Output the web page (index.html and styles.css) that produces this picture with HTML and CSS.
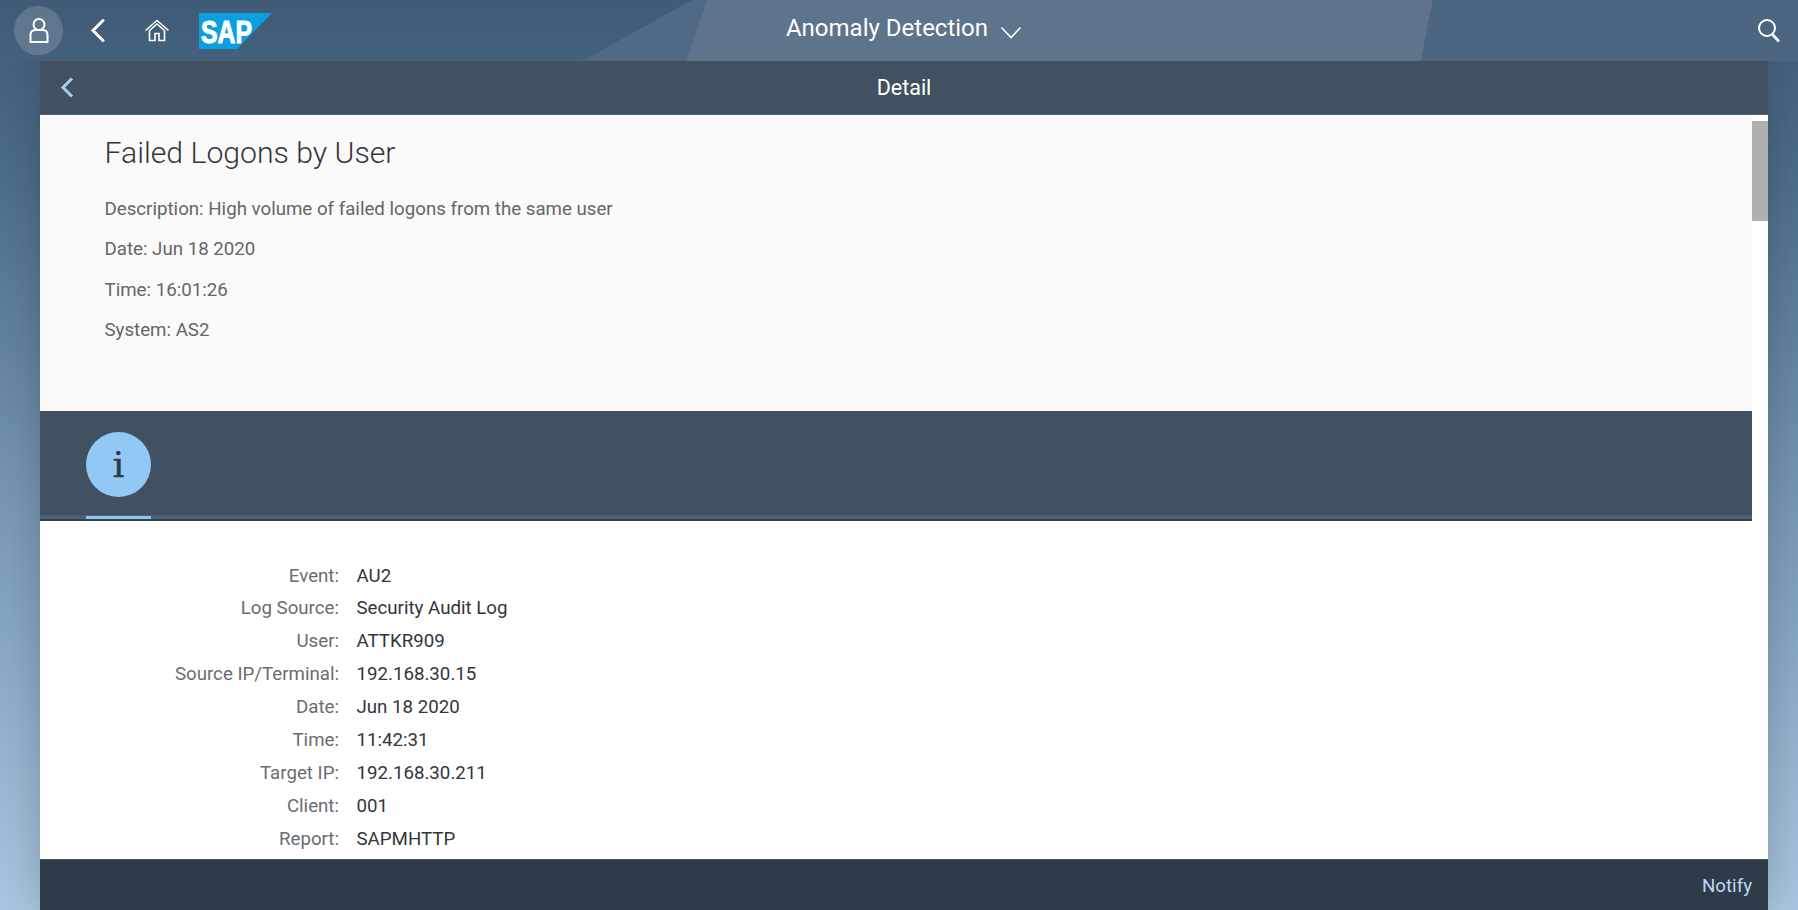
FILE: index.html

```html
<!DOCTYPE html>
<html lang="en">
<head>
    <meta charset="UTF-8">
    <title>Anomaly Detection</title>
    <link rel="stylesheet" href="styles.css">
</head>
<body>
    <svg class="backdrop" viewBox="0 0 1798 910" preserveAspectRatio="none" aria-hidden="true">
        <polygon points="582,61 692,0 707,0 686,61" fill="#4f6a84"/>
        <polygon points="707,0 1433,0 1421,61 686,61" fill="#5d748c"/>
        <polygon points="1433,0 1798,0 1798,61 1421,61" fill="#4b6680"/>
    </svg>

    <header class="shell">
        <div class="shell-left">
            <button class="shell-btn user-btn">
                <svg width="20" height="25" viewBox="0 0 20 25" fill="none" stroke="#fff" stroke-width="2">
                    <circle cx="10" cy="6.500" r="5.500"/>
                    <path d="M1.500 24v-7c0-3 2-5 5-5h7c3 0 5 2 5 5v7z"/>
                </svg>
            </button>
            <button class="shell-btn back-btn">
                <svg width="15" height="23" viewBox="0 0 15 23" fill="none" stroke="#fff" stroke-width="3" stroke-linecap="round">
                    <path d="M13 1.500 3 11.500l10 10"/>
                </svg>
            </button>
            <button class="shell-btn home-btn">
                <svg width="26" height="23" viewBox="0 0 26 23" fill="none" stroke="#fff" stroke-width="1.600">
                    <path d="M1.500 11.500 13 1.500l11.500 10M5.500 11.500 13 5l7.500 6.500M5.500 11.500V21.500h5.500V14.500h4v7h5.500V11.500"/>
                </svg>
            </button>
            <svg class="sap-logo" width="73" height="36" viewBox="0 0 73 36">
                <polygon points="0,0 73,0 38,36 0,36" fill="#0a9fe0"/>
                <text x="2" y="30" class="sap-text" textLength="51" lengthAdjust="spacingAndGlyphs">SAP</text>
            </svg>
        </div>
        <div class="shell-title">
            <span>Anomaly Detection</span>
            <svg width="22" height="13" viewBox="0 0 22 13" fill="none" stroke="#fff" stroke-width="1.600">
                <path d="M1.500 1.500 11 11.500l9.500-10"/>
            </svg>
        </div>
        <div class="shell-right">
            <svg width="24" height="25" viewBox="0 0 24 25" fill="none" stroke="#fff" stroke-width="2">
                <circle cx="10" cy="10" r="8"/>
                <path d="m15.500 16.500 6.500 7" stroke-width="2.600"/>
            </svg>
        </div>
    </header>

    <main class="app">
        <div class="nav-bar">
            <button class="nav-back">
                <svg width="14" height="21" viewBox="0 0 14 21" fill="none" stroke="#a9cfee" stroke-width="3">
                    <path d="M12 1.500 3 10.500l9 9"/>
                </svg>
            </button>
            <h2 class="nav-title">Detail</h2>
        </div>

        <div class="page">
            <div class="scroll-content">
                <section class="object-header">
                    <h1>Failed Logons by User</h1>
                    <p>Description: High volume of failed logons from the same user</p>
                    <p>Date: Jun 18 2020</p>
                    <p>Time: 16:01:26</p>
                    <p>System: AS2</p>
                </section>

                <div class="tab-bar">
                    <div class="tab-icon">i</div>
                    <div class="tab-strip"><div class="tab-mark"></div></div>
                </div>

                <section class="form">
                    <div class="form-row"><span class="form-label">Event:</span><span class="form-value">AU2</span></div>
                    <div class="form-row"><span class="form-label">Log Source:</span><span class="form-value">Security Audit Log</span></div>
                    <div class="form-row"><span class="form-label">User:</span><span class="form-value">ATTKR909</span></div>
                    <div class="form-row"><span class="form-label">Source IP/Terminal:</span><span class="form-value">192.168.30.15</span></div>
                    <div class="form-row"><span class="form-label">Date:</span><span class="form-value">Jun 18 2020</span></div>
                    <div class="form-row"><span class="form-label">Time:</span><span class="form-value">11:42:31</span></div>
                    <div class="form-row"><span class="form-label">Target IP:</span><span class="form-value">192.168.30.211</span></div>
                    <div class="form-row"><span class="form-label">Client:</span><span class="form-value">001</span></div>
                    <div class="form-row"><span class="form-label">Report:</span><span class="form-value">SAPMHTTP</span></div>
                </section>
            </div>
            <div class="scrollbar"><div class="scroll-thumb"></div></div>
        </div>

        <footer class="footer">
            <button class="notify-btn">Notify</button>
        </footer>
    </main>
</body>
</html>
```

FILE: styles.css

```css
* {
    box-sizing: border-box;
    margin: 0;
    padding: 0;
}

html, body {
    height: 100%;
}

body {
    font-family: "Roboto", "Noto Sans", sans-serif;
    overflow: hidden;
    position: relative;
    display: flex;
    flex-direction: column;
    background: linear-gradient(180deg, #3f5b76 0%, #4d6d8a 20%, #7d9cb8 60%, #a8c6e0 100%);
}

button {
    background: none;
    border: none;
    font-family: inherit;
    cursor: pointer;
}

.backdrop {
    position: absolute;
    top: 0;
    left: 0;
    width: 100%;
    height: 100%;
}

/* Shell header */
.shell {
    position: relative;
    height: 61px;
    flex: none;
    display: flex;
    align-items: center;
    justify-content: space-between;
}

.shell-left {
    display: flex;
    align-items: center;
    width: 300px;
    padding-left: 14px;
}

.shell-btn {
    display: flex;
    align-items: center;
    justify-content: center;
}

.user-btn {
    width: 49px;
    height: 49px;
    border-radius: 50%;
    background: rgba(255, 255, 255, 0.16);
}

.back-btn {
    margin-left: 27px;
}

.home-btn {
    margin-left: 39px;
}

.sap-logo {
    margin-left: 29px;
}

.sap-text {
    font-family: "Liberation Sans", sans-serif;
    font-size: 31px;
    font-weight: 700;
    fill: #fff;
    stroke: #fff;
    stroke-width: 1;
}

.shell-title {
    display: flex;
    align-items: center;
    gap: 12px;
    padding: 0 0 5px 10px;
    color: #fff;
    font-size: 24px;
}

.shell-title svg {
    margin-top: 8px;
}

.shell-right {
    width: 300px;
    display: flex;
    justify-content: flex-end;
    padding-right: 17px;
}

/* App area */
.app {
    position: relative;
    flex: 1;
    min-height: 0;
    margin: 0 30px 0 40px;
    display: flex;
    flex-direction: column;
    box-shadow: 0 0 40px rgba(0, 0, 0, 0.2);
    clip-path: inset(0 -60px 0 -60px);
}

.nav-bar {
    position: relative;
    height: 54px;
    flex: none;
    display: flex;
    align-items: center;
    justify-content: center;
    background: #415161;
    border-bottom: 1px solid #4c6076;
}

.nav-back {
    position: absolute;
    left: 20px;
    top: 16px;
}

.nav-title {
    color: #fff;
    font-size: 21.500px;
    font-weight: 400;
}

.page {
    flex: 1;
    min-height: 0;
    display: flex;
    background: #fff;
}

.scroll-content {
    flex: 1;
    min-width: 0;
    overflow: hidden;
}

.scrollbar {
    width: 16px;
    flex: none;
    background: #fff;
    padding-top: 6px;
}

.scroll-thumb {
    height: 100px;
    background: #b0b0b0;
}

/* Object header */
.object-header {
    height: 296px;
    padding: 18px 0 0 64.500px;
    background: #fafafa;
}

.object-header h1 {
    font-size: 30.200px;
    font-weight: 300;
    line-height: 40px;
    color: #32363a;
    margin-bottom: 15.500px;
}

.object-header p {
    font-size: 18.700px;
    line-height: 40.500px;
    color: #666;
}

/* Tabs */
.tab-bar {
    height: 110px;
    padding-top: 21px;
    background: #415161;
    border-bottom: 2px solid #36444f;
}

.tab-icon {
    width: 65px;
    height: 65px;
    margin-left: 46px;
    border-radius: 50%;
    background: #91c8f6;
    color: #2f3b48;
    font-family: "DejaVu Serif", serif;
    font-size: 36px;
    line-height: 65px;
    text-align: center;
    -webkit-text-stroke: 0.500px #2f3b48;
}

.tab-strip {
    height: 4px;
    margin-top: 18px;
    padding: 1px 0 0 46px;
    background: #4c6076;
}

.tab-mark {
    width: 65px;
    height: 3px;
    background: #91c8f6;
}

/* Form */
.form {
    padding-top: 38.500px;
}

.form-row {
    display: flex;
    gap: 17.500px;
    height: 32.900px;
    line-height: 33px;
    font-size: 18.700px;
}

.form-label {
    width: 299px;
    text-align: right;
    color: #6a6d70;
}

.form-value {
    color: #32363a;
}

/* Footer */
.footer {
    height: 51px;
    flex: none;
    display: flex;
    align-items: center;
    justify-content: flex-end;
    padding: 2px 16px 0 0;
    background: #2f3b48;
    border-top: 1px solid #4a5866;
}

.notify-btn {
    color: #bcd9f2;
    font-size: 18.700px;
}
```
